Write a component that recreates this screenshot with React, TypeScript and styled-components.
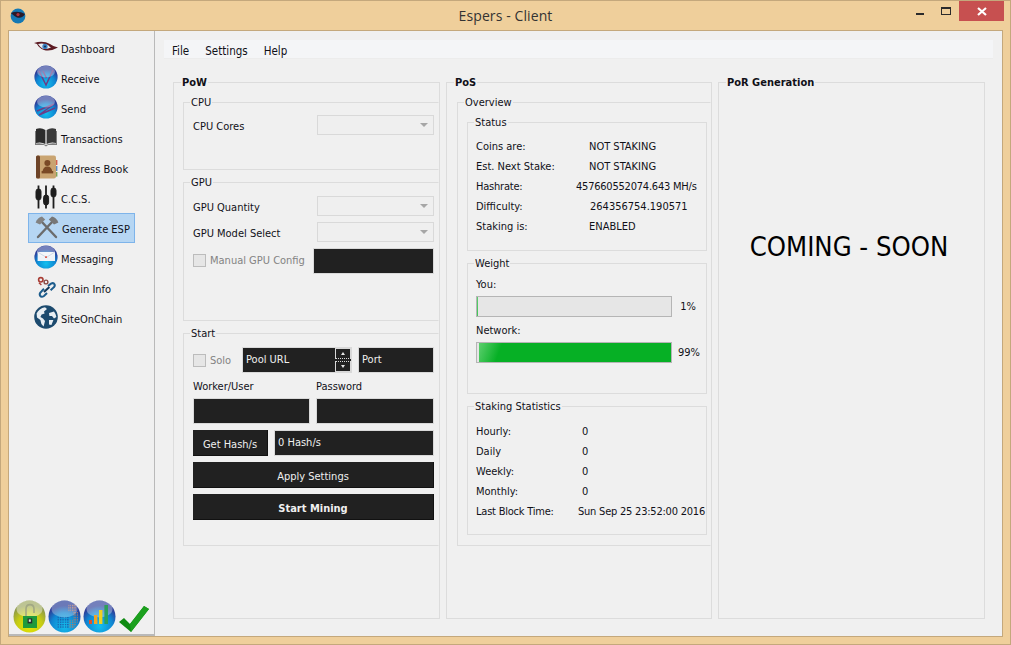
import { ReactNode } from 'react';
import styled, { createGlobalStyle } from 'styled-components';

const GlobalStyle = createGlobalStyle`
  html, body {
    margin: 0;
    padding: 0;
    background: #efcf9b;
  }
  * {
    box-sizing: border-box;
  }
`;

// icons
function Orb({ id, from, mid, rim, children }: { id: string; from: string; mid: string; rim: string; children?: ReactNode }) {
  return (
    <svg width="24" height="24" viewBox="0 0 24 24">
      <defs>
        <radialGradient id={id} cx="50%" cy="78%" r="62%">
          <stop offset="0%" stopColor={from} />
          <stop offset="65%" stopColor={mid} />
          <stop offset="100%" stopColor={rim} />
        </radialGradient>
      </defs>
      <circle cx="12" cy="12" r="11.6" fill={`url(#${id})`} />
      {children}
      <ellipse cx="12" cy="6.6" rx="9" ry="5.8" fill="#fff" opacity="0.34" />
    </svg>
  );
}

const BlueOrb = ({ id, children }: { id: string; children?: ReactNode }) => (
  <Orb id={id} from="#14c0ee" mid="#0f86d2" rim="#2c3f9a">
    {children}
  </Orb>
);

const EyeIcon = () => (
  <svg width="24" height="12" viewBox="0 0 24 12">
    <path d="M0 2 Q9 -1 16 3 Q20 6 24 6.5 Q16 11 10 9 Q5 7 3 3 Z" fill="#5c1a22" />
    <path d="M4 3 Q9 1.5 14 4 Q16 6 17 6.6 Q12 9 8.5 7.4 Q6 6 4 3 Z" fill="#e8eef4" />
    <circle cx="11" cy="5.4" r="2.6" fill="#3a7fc0" />
    <circle cx="11" cy="5.4" r="1" fill="#142a50" />
  </svg>
);

const BookIcon = () => (
  <svg width="24" height="20" viewBox="0 0 24 20">
    <path d="M2 2 Q7 0 11.4 3 V17 Q7 14.5 2 16 Z" fill="#2c2c2c" />
    <path d="M22 2 Q17 0 12.6 3 V17 Q17 14.5 22 16 Z" fill="#3a3a3a" />
    <path d="M1 4 V18 H10 L12 19.4 L14 18 H23 V4 H22 V16.6 Q17 15.4 12 18 Q7 15.4 2 16.6 V4 Z" fill="#7c7c7c" />
  </svg>
);

const AddressBookIcon = () => (
  <svg width="24" height="24" viewBox="0 0 24 24">
    <rect x="21" y="5" width="2.4" height="5" fill="#d3604c" />
    <rect x="21" y="11" width="2.4" height="5" fill="#5b8ac0" />
    <rect x="21" y="17" width="2.4" height="4.6" fill="#7da35a" />
    <rect x="2" y="0.6" width="20" height="23" rx="2" fill="#c9a471" />
    <rect x="2" y="0.6" width="4" height="23" rx="1.5" fill="#6e4428" />
    <circle cx="13.4" cy="8" r="3" fill="#7a4a26" />
    <path d="M8.4 17 Q9 11.4 13.4 11.4 Q17.8 11.4 18.4 17 Z" fill="#7a4a26" />
    <rect x="7.6" y="16" width="11.6" height="2.4" fill="#7a4a26" />
  </svg>
);

const SlidersIcon = () => (
  <svg width="24" height="24" viewBox="0 0 24 24" fill="#1d1d1d" stroke="#1d1d1d">
    <path d="M4.5 0.6 V23.4 M12 0.6 V23.4 M19.5 0.6 V23.4" strokeWidth="1.8" fill="none" />
    <rect x="2" y="4" width="5" height="11" rx="2.4" />
    <rect x="9.6" y="10" width="5" height="10" rx="2.4" />
    <rect x="17" y="3" width="5" height="9" rx="2.4" />
  </svg>
);

const PicksIcon = () => (
  <svg width="24" height="24" viewBox="0 0 24 24">
    <path d="M6 6 L21 22 M18 6 L3 22" stroke="#6c6c6c" strokeWidth="2.4" fill="none" strokeLinecap="round" />
    <path d="M0.6 7.4 Q2.6 2.6 7 1.4 L10.2 4.4 L5 9.6 Z" fill="#828282" />
    <path d="M23.4 7.4 Q21.4 2.6 17 1.4 L13.8 4.4 L19 9.6 Z" fill="#777" />
  </svg>
);

const ChainIcon = () => (
  <svg width="24" height="24" viewBox="0 0 24 24" fill="none">
    <circle cx="6.8" cy="4.8" r="2.2" stroke="#a83c34" strokeWidth="1.6" />
    <circle cx="12" cy="7" r="1.9" stroke="#8a4a44" strokeWidth="1.4" />
    <path d="M5 7.8 L7.4 10" stroke="#a83c34" strokeWidth="1.4" />
    <path d="M14 11 L17 8.6 Q19.6 7.4 20.6 9.4 Q21.4 11.4 19 13 L16.6 15.2" stroke="#1c5c8c" strokeWidth="2" />
    <path d="M10 13.8 L7.4 16.4 Q5 18.4 6 20.6 Q7.4 22.6 10 21 L13 18" stroke="#1c5c8c" strokeWidth="2" />
    <path d="M10 17 L15.4 12" stroke="#12395c" strokeWidth="2" />
  </svg>
);

const GlobeIcon = () => (
  <svg width="24" height="24" viewBox="0 0 24 24">
    <circle cx="12" cy="12" r="11.8" fill="#1c4a6e" />
    <path d="M2.6 8.6 Q5 3.4 11 2.2 L13 4 L10 6.4 L10.6 8.6 L7.6 9.4 L6.4 12 L9 13.4 L11 16 L9.6 21.4 Q6.6 19 6.4 15 L3 12.4 Z" fill="#e8eef3" />
    <path d="M15 8 L20 6.4 Q22 9 22.4 12 L20 13.4 L18 11 L15.4 11 Z" fill="#e8eef3" />
    <path d="M15 15 L19.4 15 L17.4 20 L15 19.4 Z" fill="#e8eef3" />
  </svg>
);

const LockOrb = () => (
  <svg width="33" height="33" viewBox="0 0 33 33">
    <defs>
      <radialGradient id="lockOrb" cx="50%" cy="80%" r="66%">
        <stop offset="0%" stopColor="#e6e600" />
        <stop offset="60%" stopColor="#c6cc14" />
        <stop offset="100%" stopColor="#8e9a48" />
      </radialGradient>
    </defs>
    <circle cx="16.5" cy="16.5" r="16" fill="url(#lockOrb)" />
    <ellipse cx="16.5" cy="9" rx="13" ry="8.4" fill="#fff" opacity="0.42" />
    <path d="M13 17 V9 Q13 4.6 17 4.6 Q21 4.6 21 9 V13" stroke="#a2a884" strokeWidth="1.6" fill="none" />
    <rect x="10" y="16" width="14" height="12" fill="#1e9a3c" />
    <rect x="14.6" y="18.4" width="4.6" height="5" fill="#26302a" />
    <rect x="15.8" y="19.4" width="2" height="2.4" fill="#dfe6df" />
  </svg>
);

const GridOrb = () => (
  <svg width="33" height="33" viewBox="0 0 33 33">
    <defs>
      <radialGradient id="gridOrb" cx="50%" cy="80%" r="64%">
        <stop offset="0%" stopColor="#14c0ee" />
        <stop offset="65%" stopColor="#0f86d2" />
        <stop offset="100%" stopColor="#2c3f9a" />
      </radialGradient>
      <pattern id="dotsA" width="2.4" height="2.4" patternUnits="userSpaceOnUse">
        <rect width="1.3" height="1.3" fill="#1a5aa8" />
      </pattern>
      <pattern id="dotsB" width="2.4" height="2.4" patternUnits="userSpaceOnUse">
        <rect width="1.3" height="1.3" fill="#c07a5a" />
      </pattern>
    </defs>
    <circle cx="16.5" cy="16.5" r="16" fill="url(#gridOrb)" />
    <rect x="9" y="16" width="12" height="12" fill="url(#dotsA)" />
    <path d="M20 4 H28 V12 H30 V22 L26 28 H21 V20 H25 V12 H20 Z" fill="url(#dotsB)" />
    <ellipse cx="16.5" cy="9" rx="13" ry="8.4" fill="#fff" opacity="0.3" />
  </svg>
);

const ChartOrb = () => (
  <svg width="33" height="33" viewBox="0 0 33 33">
    <defs>
      <radialGradient id="chartOrb" cx="50%" cy="80%" r="64%">
        <stop offset="0%" stopColor="#14c0ee" />
        <stop offset="65%" stopColor="#0f86d2" />
        <stop offset="100%" stopColor="#2c3f9a" />
      </radialGradient>
    </defs>
    <circle cx="16.5" cy="16.5" r="16" fill="url(#chartOrb)" />
    <ellipse cx="16.5" cy="9" rx="13" ry="8.4" fill="#fff" opacity="0.34" />
    <rect x="6" y="20" width="3" height="4" fill="#e0522c" />
    <rect x="11" y="15" width="3.4" height="9" fill="#f0a428" />
    <rect x="16" y="10" width="3.4" height="14" fill="#f0d020" />
    <rect x="21.4" y="5" width="3.6" height="19" fill="#2ca05a" />
  </svg>
);

const CheckIcon = () => (
  <svg width="32" height="28" viewBox="0 0 32 28">
    <path d="M1 17 L6 13 L12 19 L26 1 L31 4 L13 27 Z" fill="#0f8a12" />
    <path d="M12 19 L26 1 L31 4 L13 27 Z" fill="#1ca01e" />
  </svg>
);

const navItems: { label: string; icon: ReactNode; active?: boolean }[] = [
  { label: 'Dashboard', icon: <EyeIcon /> },
  {
    label: 'Receive',
    icon: (
      <BlueOrb id="orbReceive">
        <path d="M5 6 L12 20 L19 5 M9 6 L12.4 13" stroke="#6c3c86" strokeWidth="1.5" fill="none" />
      </BlueOrb>
    ),
  },
  {
    label: 'Send',
    icon: (
      <BlueOrb id="orbSend">
        <path d="M3 16 L20 9 L5 20 L21 13" stroke="#6c3c86" strokeWidth="1.4" fill="none" />
      </BlueOrb>
    ),
  },
  { label: 'Transactions', icon: <BookIcon /> },
  { label: 'Address Book', icon: <AddressBookIcon /> },
  { label: 'C.C.S.', icon: <SlidersIcon /> },
  { label: 'Generate ESP', icon: <PicksIcon />, active: true },
  {
    label: 'Messaging',
    icon: (
      <BlueOrb id="orbMessage">
        <path d="M3.6 7 L21 7 L21 16 L3.6 16 Z" fill="#eef3f8" />
        <path d="M3.6 7 L12.4 12.4 L21 7" stroke="#b4c4d8" strokeWidth="1" fill="none" />
        <rect x="11" y="11" width="2" height="2" fill="#d8483c" />
      </BlueOrb>
    ),
  },
  { label: 'Chain Info', icon: <ChainIcon /> },
  { label: 'SiteOnChain', icon: <GlobeIcon /> },
];

const statusRows = [
  { label: 'Coins are:', value: 'NOT STAKING', offset: 113 },
  { label: 'Est. Next Stake:', value: 'NOT STAKING', offset: 113 },
  { label: 'Hashrate:', value: '457660552074.643 MH/s', offset: 100, tight: true },
  { label: 'Difficulty:', value: '264356754.190571', offset: 114 },
  { label: 'Staking is:', value: 'ENABLED', offset: 113 },
];

const statRows = [
  { label: 'Hourly:', value: '0', offset: 106 },
  { label: 'Daily', value: '0', offset: 106 },
  { label: 'Weekly:', value: '0', offset: 106 },
  { label: 'Monthly:', value: '0', offset: 106 },
  { label: 'Last Block Time:', value: 'Sun Sep 25 23:52:00 2016', offset: 102, tight: true },
];

export default function App() {
  return (
    <Window>
      <GlobalStyle />
      <TitleBar>
        <TitleIcon>
          <svg width="16" height="16" viewBox="0 0 16 16">
            <circle cx="8" cy="8" r="7.4" fill="#1478b4" />
            <path d="M0.8 5 Q8 2 15 6 Q12 11 7 9.4 Q4 8 0.8 5 Z" fill="#2a1a28" />
            <circle cx="8" cy="6.6" r="1.6" fill="#b03440" />
          </svg>
        </TitleIcon>
        <TitleText>Espers - Client</TitleText>
        <WindowControls>
          <MinimizeButton />
          <MaximizeButton />
          <CloseButton>
            <svg width="10" height="9" viewBox="0 0 10 9">
              <path d="M1 1 L9 8 M9 1 L1 8" stroke="#fff" strokeWidth="2.2" />
            </svg>
          </CloseButton>
        </WindowControls>
      </TitleBar>
      <Body>
        <Sidebar>
          <NavList>
            {navItems.map((item) => (
              <NavItem key={item.label} $active={item.active}>
                <NavIcon>{item.icon}</NavIcon>
                <span>{item.label}</span>
              </NavItem>
            ))}
          </NavList>
          <StatusIcons>
            <LockOrb />
            <GridOrb />
            <ChartOrb />
            <CheckIcon />
          </StatusIcons>
        </Sidebar>
        <Main>
          <MenuBar>
            <MenuItem>File</MenuItem>
            <MenuItem>Settings</MenuItem>
            <MenuItem>Help</MenuItem>
          </MenuBar>
          <Columns>
            <Group $pad="19px 0 0 9px">
              <GroupTitle $bold>PoW</GroupTitle>
              <Group $height={68} $pad="12px 4px 0 9px" $noRight>
                <GroupTitle>CPU</GroupTitle>
                <FieldRow>
                  <FieldName>CPU Cores</FieldName>
                  <Combo />
                </FieldRow>
              </Group>
              <Group $height={139} $pad="13px 4px 0 9px" $noRight>
                <GroupTitle>GPU</GroupTitle>
                <FieldStack>
                  <FieldRow>
                    <FieldName>GPU Quantity</FieldName>
                    <Combo />
                  </FieldRow>
                  <FieldRow>
                    <FieldName>GPU Model Select</FieldName>
                    <Combo />
                  </FieldRow>
                  <ManualRow>
                    <CheckLabel>
                      <CheckBox />
                      Manual GPU Config
                    </CheckLabel>
                    <DarkInput $width={121} readOnly />
                  </ManualRow>
                </FieldStack>
              </Group>
              <Group $height={213} $pad="13px 4px 0 9px" $noRight>
                <GroupTitle>Start</GroupTitle>
                <FieldStack>
                  <InputRow>
                    <CheckLabel>
                      <CheckBox />
                      Solo
                    </CheckLabel>
                    <PoolField>
                      <DarkInput $width={110} readOnly value="Pool URL" />
                      <SpinButtons>
                        <SpinButton />
                        <SpinButton $down />
                      </SpinButtons>
                    </PoolField>
                    <DarkInput $width={76} readOnly value="Port" />
                  </InputRow>
                  <CredentialRow>
                    <CredentialCell>
                      <FieldLabel>Worker/User</FieldLabel>
                      <DarkInput readOnly />
                    </CredentialCell>
                    <CredentialCell>
                      <FieldLabel>Password</FieldLabel>
                      <DarkInput readOnly />
                    </CredentialCell>
                  </CredentialRow>
                  <InputRow>
                    <DarkButton $width={75}>Get Hash/s</DarkButton>
                    <DarkInput $width={160} readOnly value="0 Hash/s" />
                  </InputRow>
                  <DarkButton>Apply Settings</DarkButton>
                  <DarkButton $bold>Start Mining</DarkButton>
                </FieldStack>
              </Group>
            </Group>

            <Group $pad="19px 0 0 10px">
              <GroupTitle $bold>PoS</GroupTitle>
              <Group $height={444} $pad="19px 3px 0 9px" $noRight>
                <GroupTitle>Overview</GroupTitle>
                <Group $height={129} $pad="13px 0 0 8px">
                  <GroupTitle>Status</GroupTitle>
                  {statusRows.map((row) => (
                    <DataRow key={row.label} $tight={row.tight}>
                      <DataLabel>{row.label}</DataLabel>
                      <DataValue style={{ left: row.offset }}>{row.value}</DataValue>
                    </DataRow>
                  ))}
                </Group>
                <Group $height={131} $pad="12px 0 0 8px">
                  <GroupTitle>Weight</GroupTitle>
                  <BarLabel>You:</BarLabel>
                  <BarRow>
                    <BarTrack>
                      <BarFill $inset={0} style={{ width: '1px' }} />
                    </BarTrack>
                    <BarValue $right={10}>1%</BarValue>
                  </BarRow>
                  <BarLabel>Network:</BarLabel>
                  <BarRow>
                    <BarTrack>
                      <BarFill $inset={2} style={{ width: '99%' }} />
                    </BarTrack>
                    <BarValue $right={6}>99%</BarValue>
                  </BarRow>
                </Group>
                <Group $height={129} $pad="14px 0 0 8px">
                  <GroupTitle>Staking Statistics</GroupTitle>
                  {statRows.map((row) => (
                    <DataRow key={row.label} $tight={row.tight}>
                      <DataLabel>{row.label}</DataLabel>
                      <DataValue style={{ left: row.offset }}>{row.value}</DataValue>
                    </DataRow>
                  ))}
                </Group>
              </Group>
            </Group>

            <Group>
              <GroupTitle $bold>PoR Generation</GroupTitle>
              <ComingSoon>COMING - SOON</ComingSoon>
            </Group>
          </Columns>
        </Main>
      </Body>
    </Window>
  );
}

const Window = styled.div`
  display: flex;
  flex-direction: column;
  width: 1011px;
  height: 645px;
  border: 1px solid #c4a87c;
  background: #efcf9b;
  font-family: 'DejaVu Sans Condensed', 'DejaVu Sans', sans-serif;
  font-stretch: condensed;
  font-size: 11px;
  color: #101018;
  overflow: hidden;
`;

const TitleBar = styled.div`
  display: grid;
  grid-template-columns: 1fr auto 1fr;
  align-items: center;
  height: 29px;
  flex-shrink: 0;
`;

const TitleIcon = styled.div`
  display: flex;
  padding-left: 9px;
`;

const TitleText = styled.div`
  font-family: 'Open Sans', sans-serif;
  font-stretch: normal;
  font-size: 14px;
  letter-spacing: 0.1px;
  color: #333;
`;

const WindowControls = styled.div`
  display: flex;
  justify-content: flex-end;
  align-self: start;
  padding-right: 6px;
`;

const MinimizeButton = styled.div`
  width: 8px;
  height: 2px;
  margin: 12px 17px 0 0;
  background: #2b2b2b;
`;

const MaximizeButton = styled.div`
  width: 10px;
  height: 8px;
  margin: 6px 8px 0 0;
  border: 1px solid #2b2b2b;
  border-top-width: 2px;
`;

const CloseButton = styled.div`
  display: flex;
  align-items: center;
  justify-content: center;
  width: 45px;
  height: 20px;
  background: #c75050;
`;

const Body = styled.div`
  display: flex;
  flex: 1;
  margin: 0 7px 7px;
  border: 1px solid #c4a87c;
  background: #f0f0f0;
  min-height: 0;
`;

const Sidebar = styled.div`
  display: flex;
  flex-direction: column;
  justify-content: space-between;
  width: 146px;
  flex-shrink: 0;
  padding: 3px 0 1px;
  border-right: 1px solid #b9b9b9;
  border-bottom: 2px solid #b9b9b9;
`;

const NavList = styled.div`
  display: flex;
  flex-direction: column;
  padding-left: 19px;
`;

const NavItem = styled.div<{ $active?: boolean }>`
  display: flex;
  align-items: center;
  gap: 3px;
  width: 107px;
  height: 30px;
  margin: ${({ $active }) => ($active ? '-1px 0 1px' : '0')};
  padding: ${({ $active }) => ($active ? '2px 0 0 6px' : '0 0 0 5px')};
  border: 1px solid ${({ $active }) => ($active ? '#7eb4ea' : 'transparent')};
  background: ${({ $active }) => ($active ? '#b6d6f3' : 'transparent')};
  white-space: nowrap;
`;

const NavIcon = styled.div`
  display: flex;
  align-items: center;
  justify-content: center;
  width: 24px;
  height: 24px;
  margin-top: -5px;
`;

const StatusIcons = styled.div`
  display: flex;
  align-items: flex-end;
  gap: 2px;
  padding-left: 4px;
`;

const Main = styled.div`
  display: flex;
  flex-direction: column;
  flex: 1;
  min-width: 0;
  padding: 9px 9px 17px;
`;

const MenuBar = styled.div`
  display: flex;
  align-items: center;
  height: 19px;
  flex-shrink: 0;
  padding-top: 4px;
  background: #f4f5f7;
  border-bottom: 1px solid #ececec;
  font-size: 11.5px;
`;

const MenuItem = styled.div`
  padding: 0 8px;
`;

const Columns = styled.div`
  display: grid;
  grid-template-columns: 267px 266px 267px;
  gap: 6px;
  flex: 1;
  margin-top: 23px;
  padding: 0 0 0 9px;
  min-height: 0;
`;

const Group = styled.div<{ $height?: number; $pad?: string; $noRight?: boolean }>`
  position: relative;
  display: flex;
  flex-direction: column;
  height: ${({ $height }) => ($height ? `${$height}px` : 'auto')};
  padding: ${({ $pad }) => $pad ?? '0'};
  border: 1px solid #dcdcdc;
  border-right-color: ${({ $noRight }) => ($noRight ? 'transparent' : '#dcdcdc')};

  & > & + & {
    margin-top: 12px;
  }
`;

const GroupTitle = styled.div<{ $bold?: boolean }>`
  position: absolute;
  top: -8px;
  left: ${({ $bold }) => ($bold ? '7px' : '6px')};
  padding: 0 1px;
  line-height: 15px;
  background: #f0f0f0;
  font-weight: ${({ $bold }) => ($bold ? 700 : 400)};
  white-space: nowrap;
`;

const FieldStack = styled.div`
  display: flex;
  flex-direction: column;
  gap: 6px;
`;

const FieldRow = styled.div`
  display: flex;
  align-items: center;
  justify-content: space-between;
  height: 20px;
`;

const FieldName = styled.span`
  padding-top: 2px;
`;

const Combo = styled.div`
  position: relative;
  width: 117px;
  height: 20px;
  border: 1px solid #d9d9d9;
  background: #efefef;

  &::after {
    content: '';
    position: absolute;
    top: 7px;
    right: 5px;
    border-style: solid;
    border-width: 4px 4px 0;
    border-color: #a6a6a6 transparent transparent;
  }
`;

const ManualRow = styled.div`
  display: flex;
  align-items: center;
  justify-content: space-between;
  height: 25px;
`;

const CheckLabel = styled.div`
  display: flex;
  align-items: center;
  gap: 4px;
  color: #838383;
  white-space: nowrap;
`;

const CheckBox = styled.div`
  width: 13px;
  height: 13px;
  border: 1px solid #bcbcbc;
  background: #e6e6e6;
`;

const DarkInput = styled.input<{ $width?: number }>`
  display: block;
  width: ${({ $width }) => ($width ? `${$width}px` : '100%')};
  height: 26px;
  padding: 0 0 1px 3px;
  border: 1px solid #d9d9d9;
  outline: none;
  background: #212121;
  color: #f0f0f0;
  font: inherit;
`;

const InputRow = styled.div`
  display: flex;
  align-items: center;
  justify-content: space-between;
  height: 26px;
`;

const PoolField = styled.div`
  position: relative;
  margin-left: auto;
  margin-right: 6px;
`;

const SpinButtons = styled.div`
  position: absolute;
  top: 1px;
  right: 1px;
  display: flex;
  flex-direction: column;
  gap: 2px;
`;

const SpinButton = styled.div<{ $down?: boolean }>`
  position: relative;
  width: 16px;
  height: 11px;
  border: 1px solid #d8d8d8;
  border-top-style: ${({ $down }) => ($down ? 'dotted' : 'solid')};
  border-bottom-style: ${({ $down }) => ($down ? 'solid' : 'dotted')};

  &::after {
    content: '';
    position: absolute;
    top: 3px;
    left: 5px;
    border-style: solid;
    border-color: transparent;
    border-width: ${({ $down }) => ($down ? '3px 2px 0' : '0 2px 3px')};
    border-top-color: ${({ $down }) => ($down ? '#e8e8e8' : 'transparent')};
    border-bottom-color: ${({ $down }) => ($down ? 'transparent' : '#e8e8e8')};
  }
`;

const CredentialRow = styled.div`
  display: grid;
  grid-template-columns: 117px 118px;
  gap: 6px;
`;

const CredentialCell = styled.div`
  display: flex;
  flex-direction: column;
`;

const FieldLabel = styled.div`
  height: 19px;
  line-height: 15px;
`;

const DarkButton = styled.div<{ $width?: number; $bold?: boolean }>`
  display: flex;
  align-items: center;
  justify-content: center;
  width: ${({ $width }) => ($width ? `${$width}px` : '100%')};
  height: 26px;
  padding-top: 3px;
  background: #212121;
  border-right: 1px solid #111;
  border-bottom: 1px solid #111;
  color: #f0f0f0;
  font-weight: ${({ $bold }) => ($bold ? 700 : 400)};
`;

const DataRow = styled.div<{ $tight?: boolean }>`
  position: relative;
  height: 20px;
  line-height: 22px;
  white-space: nowrap;
  letter-spacing: ${({ $tight }) => ($tight ? '-0.22px' : '0')};
`;

const DataLabel = styled.span``;

const DataValue = styled.span`
  position: absolute;
  top: 0;
`;

const BarLabel = styled.div`
  height: 20px;
  line-height: 18px;
`;

const BarRow = styled.div`
  display: flex;
  align-items: center;
  height: 21px;
  margin-bottom: 5px;
`;

const BarTrack = styled.div`
  display: flex;
  justify-content: flex-end;
  width: 196px;
  height: 21px;
  border: 1px solid #b5b5b5;
  background: #e6e6e6;
`;

const BarFill = styled.div<{ $inset: number }>`
  margin-right: auto;
  margin-left: ${({ $inset }) => $inset}px;
  height: 100%;
  background: linear-gradient(110deg, #5ccf6e 0, #06b025 22px);
`;

const BarValue = styled.div<{ $right: number }>`
  margin-left: auto;
  padding-right: ${({ $right }) => $right}px;
`;

const ComingSoon = styled.div`
  margin-top: 147px;
  padding-right: 5px;
  text-align: center;
  font-size: 27.2px;
  line-height: 34px;
  color: #000;
`;
